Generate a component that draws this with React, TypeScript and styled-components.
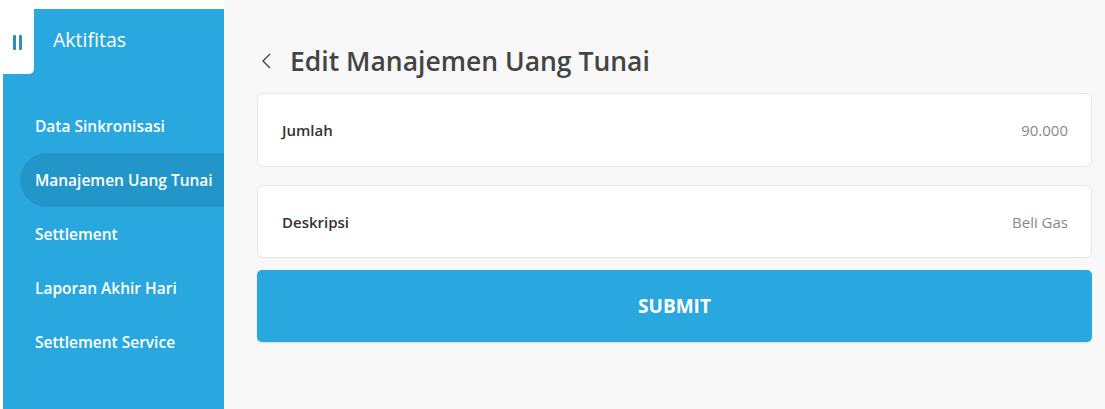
import React from "react";
import styled, { createGlobalStyle } from "styled-components";

const GlobalStyle = createGlobalStyle`
  html, body {
    margin: 0;
    padding: 0;
    background: #ffffff;
  }
  body {
    font-family: "Open Sans", Lato, sans-serif;
  }
`;

const blue = "#29a8e0";

const Page = styled.div`
  display: flex;
  height: 409px;
  width: 1105px;
  background: #ffffff;
  overflow: hidden;
`;

const Sidebar = styled.aside`
  margin: 9px 0 0 3px;
  width: 221px;
  background: ${blue};
  display: flex;
  flex-direction: column;
`;

const SideHead = styled.div`
  display: flex;
  align-items: flex-start;
  height: 65px;
`;

const Tab = styled.div`
  width: 31px;
  height: 65px;
  background: #ffffff;
  border-bottom-right-radius: 5px;
  display: flex;
  justify-content: center;
  padding-top: 26px;
  box-sizing: border-box;
`;

const TabBars = styled.div`
  display: flex;
  gap: 3px;
  margin-left: -3px;

  span {
    width: 3px;
    height: 15px;
    background: #2a8fc0;
    border-radius: 1px;
  }
`;

const SideTitle = styled.div`
  margin: 17px 0 0 19px;
  color: #ffffff;
  font-size: 19.5px;
  font-weight: 400;
`;

const Nav = styled.nav`
  display: flex;
  flex-direction: column;
  margin-top: 25px;
`;

const NavItem = styled.div<{ $active?: boolean }>`
  height: 54px;
  margin-left: 17px;
  padding-left: 15px;
  display: flex;
  align-items: center;
  color: #ffffff;
  font-size: 15.5px;
  font-weight: 600;
  white-space: nowrap;
  border-radius: 27px 0 0 27px;
  background: ${(p) => (p.$active ? "#2396c9" : "transparent")};
`;

const Main = styled.main`
  flex: 1;
  background: #f8f8f8;
  padding: 0 13px 0 33px;
  display: flex;
  flex-direction: column;
`;

const Header = styled.div`
  display: flex;
  align-items: center;
  height: 93px;
  padding: 28px 0 0 4px;
  gap: 17px;
  box-sizing: border-box;
`;

const Title = styled.h1`
  margin: 0;
  font-size: 26.5px;
  font-weight: 600;
  color: #444444;
`;

const Field = styled.div<{ $h: number; $gap?: number }>`
  height: ${(p) => p.$h}px;
  margin-top: ${(p) => p.$gap ?? 0}px;
  box-sizing: border-box;
  background: #ffffff;
  border: 1px solid #e6e6e6;
  border-radius: 6px;
  display: flex;
  align-items: center;
  justify-content: space-between;
  padding: 0 23px 0 24px;
  font-size: 15px;
`;

const Label = styled.span`
  color: #333333;
  font-weight: 600;
`;

const Value = styled.span`
  color: #888888;
`;

const Form = styled.div`
  display: flex;
  flex-direction: column;
`;

const SubmitButton = styled.button`
  height: 72px;
  margin-top: 12px;
  border: none;
  border-radius: 5px;
  background: ${blue};
  color: #ffffff;
  font-family: inherit;
  font-size: 19px;
  font-weight: 700;
  box-shadow: 0 1px 2px rgba(0, 0, 0, 0.12);
`;

const items = [
  "Data Sinkronisasi",
  "Manajemen Uang Tunai",
  "Settlement",
  "Laporan Akhir Hari",
  "Settlement Service",
];

export default function App() {
  return (
    <Page>
      <GlobalStyle />
      <Sidebar>
        <SideHead>
          <Tab>
            <TabBars>
              <span />
              <span />
            </TabBars>
          </Tab>
          <SideTitle>Aktifitas</SideTitle>
        </SideHead>
        <Nav>
          {items.map((it) => (
            <NavItem key={it} $active={it === "Manajemen Uang Tunai"}>
              {it}
            </NavItem>
          ))}
        </Nav>
      </Sidebar>
      <Main>
        <Header>
          <svg width="12" height="18" viewBox="0 0 12 18">
            <path d="M9 2 L2 9 L9 16" fill="none" stroke="#444" strokeWidth="1.4" />
          </svg>
          <Title>Edit Manajemen Uang Tunai</Title>
        </Header>
        <Form>
          <Field $h={74}>
            <Label>Jumlah</Label>
            <Value>90.000</Value>
          </Field>
          <Field $h={73} $gap={18}>
            <Label>Deskripsi</Label>
            <Value>Beli Gas</Value>
          </Field>
          <SubmitButton>SUBMIT</SubmitButton>
        </Form>
      </Main>
    </Page>
  );
}
